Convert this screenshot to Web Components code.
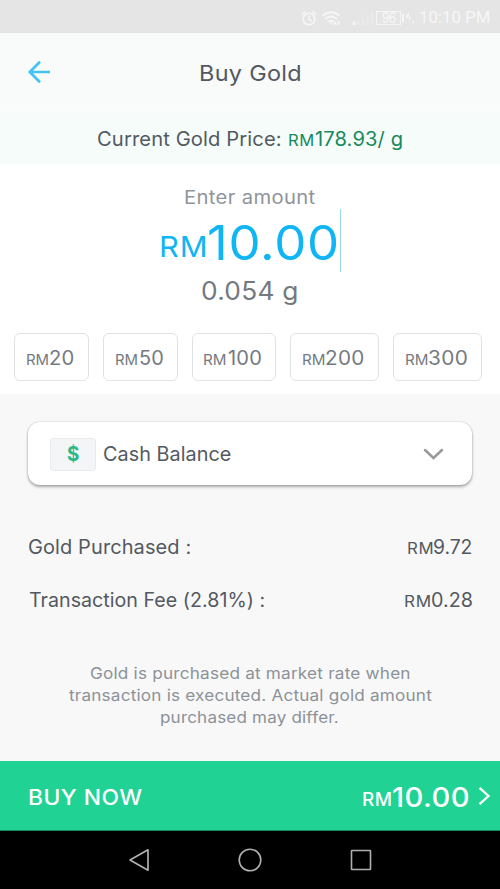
<!DOCTYPE html>
<html lang="en">
<head>
<meta charset="utf-8">
<title>Buy Gold</title>
<style>
html,body{margin:0;padding:0}
body{width:500px;height:889px;overflow:hidden;background:#f8f8f8;font-family:Inter,"Liberation Sans",sans-serif;color:#535961}
</style>
</head>
<body>
<buy-gold-app></buy-gold-app>
<script>
const define = (name, html, setup) => customElements.define(name, class extends HTMLElement {
  constructor() {
    super();
    this.attachShadow({mode: 'open'}).innerHTML = html;
  }
  connectedCallback() { if (setup) setup(this, this.shadowRoot); }
});

/* One line of text set to an exact ink width: w = width, size = font size, weight, dy = baseline shift */
const ctx = document.createElement('canvas').getContext('2d');
customElements.define('fit-text', class extends HTMLElement {
  constructor() {
    super();
    this.attachShadow({mode: 'open'}).innerHTML =
      '<style>:host{display:block;flex:none;white-space:pre;line-height:1}span{display:inline-block;transform-origin:0 50%}</style><span></span>';
  }
  connectedCallback() {
    const text = this.getAttribute('text'), w = +this.getAttribute('w');
    const size = +this.getAttribute('size'), weight = this.getAttribute('weight') || 380;
    ctx.font = `${weight} ${size}px Inter, "Liberation Sans", sans-serif`;
    const m = ctx.measureText(text);
    const ink = m.actualBoundingBoxRight + m.actualBoundingBoxLeft;
    const scale = Math.pow(w / ink, 0.75);
    const spacing = text.length > 1 ? (w / scale - ink) / (text.length - 1) : 0;
    const s = this.shadowRoot.querySelector('span');
    s.textContent = text;
    s.style.cssText = `letter-spacing:${spacing}px;transform:scaleX(${scale});margin-left:${m.actualBoundingBoxLeft * scale}px`;
    this.style.cssText += `;width:${w}px;height:${size}px;font-size:${size}px;font-weight:${weight};margin-top:${2 * (+this.getAttribute('dy') || 0)}px`;
  }
});

/* Small currency prefix followed by a larger figure */
define('money-text', `<style>:host{display:flex;align-items:center;flex:none}</style>`, (el, root) => {
  const a = n => el.getAttribute(n);
  const [rw, rs, gap, vw, vs, dy] = a('fit').split(' ').map(Number);
  const wt = a('weight') || 380;
  root.innerHTML += `<fit-text text="RM" w="${rw}" size="${rs}" weight="${wt}" dy="${dy}" style="margin-right:${gap}px"></fit-text><fit-text text="${a('value')}" w="${vw}" size="${vs}" weight="${wt}"></fit-text>`;
});

define('status-bar', `<style>
:host{display:flex;align-items:center;height:33px;padding:2px 0 0 301px;background:#e5e5e5;color:#f7f7f7;box-sizing:border-box}
svg{display:block;flex:none}
.bat{box-sizing:border-box;width:25px;height:14px;border:1px solid #f4f4f4;display:flex;align-items:center;justify-content:center}
</style>
<svg width="75" height="20" viewBox="0 0 75 20" fill="none" stroke="#f7f7f7" stroke-width="1.6">
<circle cx="8" cy="11" r="5.8"/><path d="M8 7.500V11l2.500 1.800M1 6.500 4.500 3.500M15 6.500 11.500 3.500"/>
<path stroke-width="2" d="M21.500 7.500Q30 .8 38.500 7.500M24.200 11Q30 6 36 11M27 14Q30 11.500 33 14"/>
<path fill="#f7f7f7" stroke="none" d="M28.500 14.500h3l-1.500 2.300zM34 13.500l2 3h-4zM37 13h1.500v4H37z"/>
<path stroke="#ebebeb" stroke-width="2" d="M57.500 12.500V17M62 10v7M66.500 7v10M71 3.500V17"/><path stroke-width="2.500" d="M53 13.500V17"/></svg>
<div class="bat"><fit-text text="96" w="13.500" size="14"></fit-text></div>
<svg width="16" height="20" viewBox="0 0 16 20" fill="#f6f6f6"><path d="M1 6h2v8H1zM5 8l3-4v5h1.500L8 14V9.500H5zM9.500 9l2.500 4h1.500L11.500 17V12z"/></svg>
<fit-text text="10:10 PM" w="69.500" size="16.500" style="margin-left:2px;font-family:Roboto,sans-serif" dy=".5"></fit-text>`);

define('top-bar', `<style>
:host{display:block;height:131px;background:linear-gradient(#f9fbfa 0 55%,#f5fcfa 68%)}
.title{display:grid;grid-template-columns:200px 1fr;align-items:center;height:80px}
svg{display:block;margin:-2px 0 0 27px}
.price{display:flex;align-items:center;height:53px;padding-left:98.500px}
</style>
<div class="title"><svg width="25" height="24" viewBox="0 0 25 24" fill="none" stroke="#44c2f2" stroke-width="2.700"><path d="M13 1.800 2.800 12 13 22.200M2.800 12H23"/></svg>
<fit-text text="Buy Gold" w="100" size="22"></fit-text></div>
<div class="price"><fit-text text="Current Gold Price:" w="183" size="19.500"></fit-text>
<money-text value="178.93/ g" fit="24 15.500 1.500 87 19.500 1" style="margin-left:7.500px;color:#16895d"></money-text></div>`);

define('amount-entry', `<style>
:host{display:flex;flex-direction:column;height:169px;background:#fff;padding-top:24px;box-sizing:border-box}
.big{display:flex;align-items:center;height:64px;margin-top:2px;padding-left:161.500px;color:#0fb5f4}
i{width:1px;height:63px;background:#99d8e6;margin-left:3px}
</style>
<fit-text text="Enter amount" w="130" size="18.500" style="margin-left:185.500px;color:#8f949b"></fit-text>
<div class="big"><money-text value="10.00" fit="44 29 3.500 128 47.500 4" style="margin-top:4px"></money-text><i></i></div>
<fit-text text="0.054 g" w="95" size="25" style="margin-left:202.500px;color:#74797f" dy="3"></fit-text>`);

define('amount-chip', `<style>:host{display:flex;align-items:center;justify-content:center;box-sizing:border-box;height:48px;border:1px solid #dfe3e6;border-radius:6px;background:#fff;color:#747a81;padding:3px 2px 0 0}</style><slot></slot>`);
define('amount-chips', `<style>:host{display:grid;grid-template-columns:75px 75px 84px 89px 89px;gap:14px;padding:0 14px 13px;background:#fff;height:48px;border-bottom:1px solid #fafafa}</style>
<amount-chip><money-text value="20" fit="21.500 15 2 24 19.500 .5"></money-text></amount-chip>
<amount-chip><money-text value="50" fit="21.500 15 2.500 23.500 19.500 .5"></money-text></amount-chip>
<amount-chip><money-text value="100" fit="22 15 2 33.500 19.500 .5"></money-text></amount-chip>
<amount-chip><money-text value="200" fit="22 15 1.500 38 19.500 .5"></money-text></amount-chip>
<amount-chip><money-text value="300" fit="22 15 1.500 38.500 19.500 .5"></money-text></amount-chip>`);

define('account-select', `<style>
:host{display:flex;align-items:center;box-sizing:border-box;height:63px;margin:27px 28px 0;padding:1px 28px 0 22px;border-radius:12px;background:#fff;box-shadow:0 2px 3px #0000004d,0 0 2px #00000038}
.icon{display:flex;align-items:center;justify-content:center;box-sizing:border-box;width:46px;height:33px;border:1px solid #e9ecef;border-radius:3px;background:#f4f5f7;color:#2bb88b}
svg{margin-left:auto}
</style>
<div class="icon"><fit-text text="$" w="12" size="20" weight="700"></fit-text></div>
<fit-text text="Cash Balance" w="127" size="19.500" style="margin-left:8px" dy="0.500"></fit-text>
<svg width="21" height="13" viewBox="0 0 21 13" fill="none" stroke="#999" stroke-width="2.500" stroke-linecap="round"><path d="M2 2l8.500 8L19 2"/></svg>`);

define('summary-row', `<style>:host{display:flex;align-items:center;justify-content:space-between;height:53px;padding:0 28.500px}</style><slot></slot>`);

define('market-note', `<style>:host{display:flex;flex-direction:column;align-items:center;gap:6px;margin-top:37.500px;color:#8b9299}</style>
<fit-text text="Gold is purchased at market rate when" w="320" size="16"></fit-text>
<fit-text text="transaction is executed. Actual gold amount" w="362.500" size="16"></fit-text>
<fit-text text="purchased may differ." w="177" size="16"></fit-text>`);

define('buy-bar', `<style>:host{display:flex;align-items:center;box-sizing:border-box;height:70px;padding:3px 9.500px 0 29px;background:#20d294;border-bottom:1px solid #14885f;color:#fff}
svg{margin:-2px 0 0 9.500px}</style>
<fit-text text="BUY NOW" w="113" size="21" weight="550"></fit-text>
<money-text value="10.00" weight="520" fit="27.500 18 2.500 75 27 3" style="margin-left:auto"></money-text>
<svg width="13" height="20" viewBox="0 0 13 20" fill="none" stroke="#fff" stroke-width="2.300"><path d="M1.500 1.800 10.500 10l-9 8.200"/></svg>`);

define('nav-bar', `<style>:host{display:flex;align-items:center;justify-content:center;gap:87px;height:58px;background:#000}svg{display:block}</style>
<svg width="24" height="24" viewBox="0 0 24 24"><path d="M21 1.800v20.400L3 12z" fill="none" stroke="#b0b0b0" stroke-width="1.700" stroke-linejoin="round"/></svg>
<svg width="24" height="24" viewBox="0 0 24 24"><circle cx="12" cy="12" r="10.800" fill="none" stroke="#b0b0b0" stroke-width="1.600"/></svg>
<svg width="24" height="24" viewBox="0 0 24 24"><rect x="2.500" y="2.500" width="19" height="19" rx=".5" fill="none" stroke="#b0b0b0" stroke-width="1.600"/></svg>`);

define('buy-gold-app', `<style>
:host{display:flex;flex-direction:column;width:500px;height:889px;background:#f8f8f8}
.rows{margin-top:36px}
.foot{margin-top:auto}
</style>
<status-bar></status-bar>
<top-bar></top-bar>
<amount-entry></amount-entry>
<amount-chips></amount-chips>
<account-select></account-select>
<div class="rows">
<summary-row><fit-text text="Gold Purchased :" w="161.500" size="19.500" style="margin-left:.5px"></fit-text><money-text value="9.72" fit="24.500 15.500 1.500 37.500 19.500 1"></money-text></summary-row>
<summary-row><fit-text text="Transaction Fee (2.81%) :" w="235.500" size="19.500" style="margin-left:.5px"></fit-text><money-text value="0.28" fit="25 15.500 1.500 40 19.500 1"></money-text></summary-row>
</div>
<market-note></market-note>
<div class="foot"><buy-bar></buy-bar><nav-bar></nav-bar></div>`);
</script>
</body>
</html>
